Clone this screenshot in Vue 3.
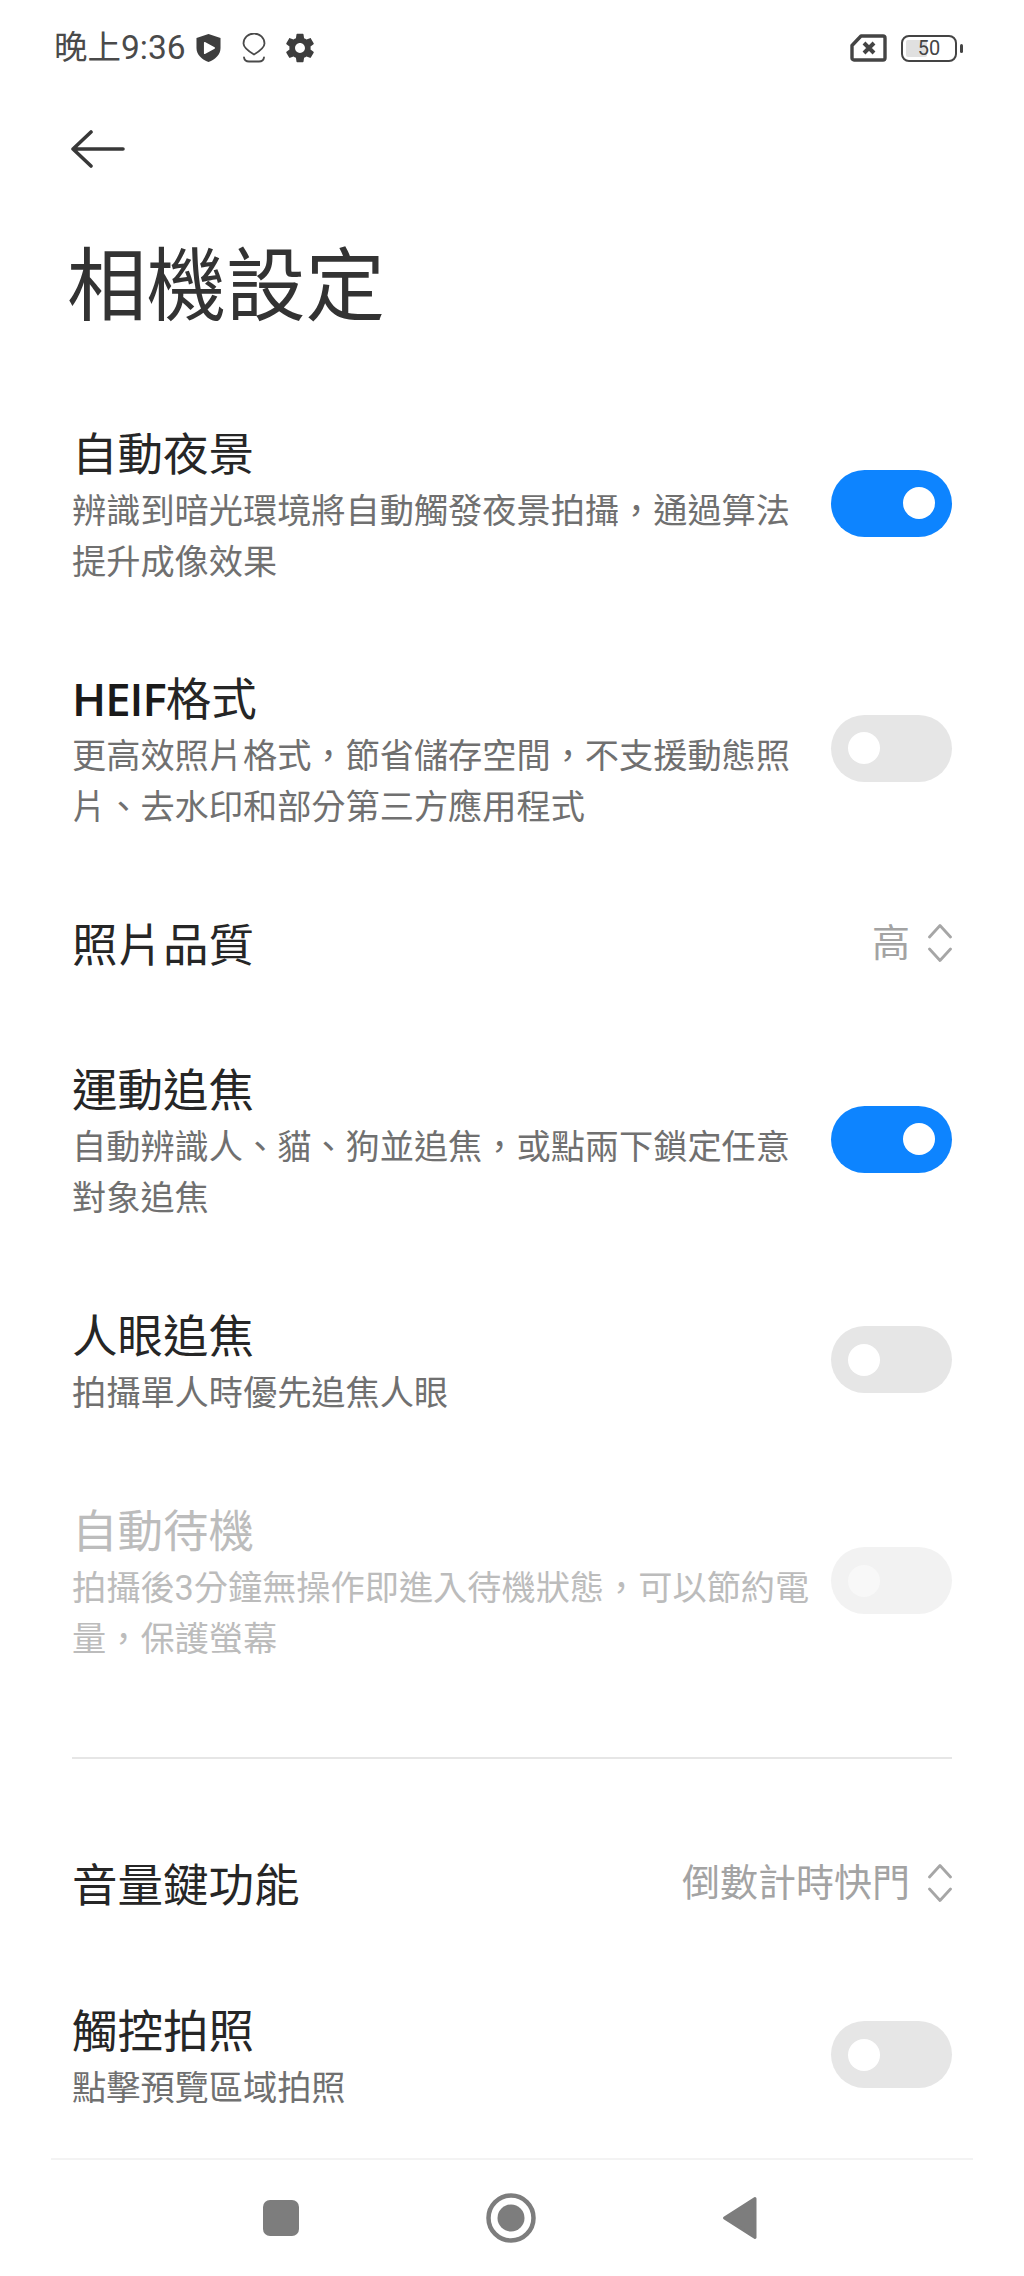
<script setup>
const group1 = [
  { title: '自動夜景', desc: ['辨識到暗光環境將自動觸發夜景拍攝，通過算法', '提升成像效果'], on: true },
  { latin: 'HEIF', title: '格式', desc: ['更高效照片格式，節省儲存空間，不支援動態照', '片、去水印和部分第三方應用程式'], on: false },
  { title: '照片品質', value: '高' },
  { title: '運動追焦', desc: ['自動辨識人、貓、狗並追焦，或點兩下鎖定任意', '對象追焦'], on: true },
  { title: '人眼追焦', desc: ['拍攝單人時優先追焦人眼'], on: false },
  { title: '自動待機', desc: ['拍攝後3分鐘無操作即進入待機狀態，可以節約電', '量，保護螢幕'], on: false, disabled: true },
]
const group2 = [
  { title: '音量鍵功能', value: '倒數計時快門' },
  { title: '觸控拍照', desc: ['點擊預覽區域拍照'], on: false },
]
</script>

<template>
  <div class="page">
    <div class="status">
      <span class="time">晚上9:36</span>
      <svg class="ic-shield" width="25" height="30" viewBox="0 0 26 30">
        <path d="M13 0.5 25.5 4.5V15C25.5 22 20 27 13 29.5 6 27 0.5 22 0.5 15V4.5Z" fill="#3d3d3d"/>
        <path d="M9 9.5 19 15 9 20.5Z" fill="#fff" stroke="#fff" stroke-width="1.5" stroke-linejoin="round"/>
      </svg>
      <svg class="ic-drop" width="24" height="30" viewBox="0 0 24 30" fill="none" stroke="#4a4a4a" stroke-width="1.8" stroke-linecap="round" stroke-linejoin="round">
        <path d="M12 21.5C7 18.5 1.5 15 1.5 10.5A10.5 10 0 0 1 22.5 10.5C22.5 15 17 18.5 12 21.5Z"/>
        <path d="M2 24.5C2.5 27.5 4.5 28.5 7 28.5H17C19.5 28.5 21.500 27.5 22 24.500"/>
      </svg>
      <svg class="ic-gear" width="34" height="34" viewBox="0 0 24 24">
        <path fill="#3d3d3d" d="M19.43 12.98c.04-.32.07-.64.07-.98s-.03-.66-.07-.98l2.11-1.65c.19-.15.24-.42.12-.64l-2-3.46c-.12-.22-.39-.3-.61-.22l-2.49 1c-.52-.4-1.08-.73-1.69-.98l-.38-2.65C14.46 2.18 14.25 2 14 2h-4c-.25 0-.46.18-.49.42l-.38 2.65c-.61.25-1.17.59-1.69.98l-2.49-1c-.23-.09-.49 0-.61.22l-2 3.46c-.13.22-.07.49.12.64l2.11 1.65c-.04.32-.07.65-.07.98s.03.66.07.98l-2.11 1.65c-.19.15-.24.42-.12.64l2 3.46c.12.22.39.3.61.22l2.49-1c.52.4 1.08.73 1.69.98l.38 2.65c.03.24.24.42.49.42h4c.25 0 .46-.18.49-.42l.38-2.65c.61-.25 1.17-.59 1.69-.98l2.49 1c.23.09.49 0 .61-.22l2-3.46c.12-.22.07-.49-.12-.64l-2.11-1.65zM12 15.500c-1.93 0-3.500-1.570-3.500-3.500s1.570-3.500 3.500-3.500 3.500 1.570 3.500 3.500-1.570 3.500-3.500 3.500z"/>
      </svg>
      <span class="spacer"></span>
      <svg width="37" height="28" viewBox="0 0 37 28" fill="none" stroke="#444" stroke-width="3.4" stroke-linejoin="round">
        <path d="M2 11.500 11 2H33A2 2 0 0 1 35 4V24A2 2 0 0 1 33 26H4A2 2 0 0 1 2 24Z"/>
        <path d="M14 9 24 19M24 9 14 19" stroke-width="4"/>
      </svg>
      <div class="battery">
        <div class="batt-body"><span class="batt-fill"></span><span class="batt-num">50</span></div>
        <span class="batt-cap"></span>
      </div>
    </div>

    <div class="back">
      <svg width="54" height="38" viewBox="0 0 54 38" fill="none" stroke="#383838" stroke-width="3.6" stroke-linecap="round" stroke-linejoin="round">
        <path d="M2 19H52M20 2 2 19 20 36"/>
      </svg>
    </div>

    <h1 class="heading">相機設定</h1>

    <div class="list">
      <div v-for="item in group1" :key="item.title" class="row" :class="{ disabled: item.disabled, single: !item.desc, one: item.desc && item.desc.length === 1 }">
        <div class="text">
          <div class="title"><span v-if="item.latin" class="latin">{{ item.latin }}</span>{{ item.title }}</div>
          <div v-if="item.desc" class="desc"><div v-for="l in item.desc" :key="l">{{ l }}</div></div>
        </div>
        <div v-if="item.value" class="value">
          <span>{{ item.value }}</span>
          <svg width="24" height="38" viewBox="0 0 24 38" fill="none" stroke="#a6a6a6" stroke-width="2.8" stroke-linecap="round" stroke-linejoin="round"><path d="M1.500 13 12 1.500 22.500 13M1.500 25 12 36.500 22.500 25"/></svg>
        </div>
        <div v-else class="switch" :class="{ on: item.on }"><span class="knob"></span></div>
      </div>
    </div>

    <div class="divider"></div>

    <div class="list">
      <div v-for="item in group2" :key="item.title" class="row" :class="{ single: !item.desc, one: item.desc && item.desc.length === 1 }">
        <div class="text">
          <div class="title">{{ item.title }}</div>
          <div v-if="item.desc" class="desc"><div v-for="l in item.desc" :key="l">{{ l }}</div></div>
        </div>
        <div v-if="item.value" class="value">
          <span>{{ item.value }}</span>
          <svg width="24" height="38" viewBox="0 0 24 38" fill="none" stroke="#a6a6a6" stroke-width="2.8" stroke-linecap="round" stroke-linejoin="round"><path d="M1.500 13 12 1.500 22.500 13M1.500 25 12 36.500 22.500 25"/></svg>
        </div>
        <div v-else class="switch" :class="{ on: item.on }"><span class="knob"></span></div>
      </div>
    </div>

    <div class="nav">
      <span class="nav-square"></span>
      <svg width="50" height="50" viewBox="0 0 50 50">
        <circle cx="25" cy="25" r="22.500" fill="none" stroke="#7d7d7d" stroke-width="4.500"/>
        <circle cx="25" cy="25" r="13.500" fill="#7d7d7d"/>
      </svg>
      <svg width="36" height="44" viewBox="0 0 36 44">
        <path d="M33 2.500 2.500 22 33 41.500Z" fill="#7d7d7d" stroke="#7d7d7d" stroke-width="3" stroke-linejoin="round"/>
      </svg>
    </div>
  </div>
</template>

<style>
html, body { margin: 0; background: #fff; }
</style>

<style scoped>
.page {
  width: 1024px;
  height: 2276px;
  overflow: hidden;
  background: #fff;
  font-family: "Roboto", "Noto Sans CJK TC", sans-serif;
  color: #333;
  display: flex;
  flex-direction: column;
}
.status {
  height: 96px;
  box-sizing: border-box;
  padding: 0 61px 0 54px;
  display: flex;
  align-items: center;
  color: #4a4a4a;
  flex: none;
}
.time { font-size: 33.5px; line-height: 96px; margin-right: 10px; }
.ic-shield { margin-right: 21px; }
.ic-drop { margin-right: 17px; }
.spacer { flex: 1; }
.battery { display: flex; align-items: center; margin-left: 14px; }
.batt-body {
  position: relative;
  width: 56px;
  height: 27px;
  box-sizing: border-box;
  border: 2.5px solid #444;
  border-radius: 8px;
}
.batt-fill { position: absolute; left: 3px; top: 3px; bottom: 3px; width: 21px; background: #e0e0e0; border-radius: 2px; }
.batt-num {
  position: absolute; inset: 0; text-align: center;
  font-size: 20px; line-height: 22px; color: #444;
}
.batt-cap { width: 3px; height: 9px; background: #444; margin-left: 3px; border-radius: 1.500px; }
.back { height: 54px; margin-top: 26px; padding-left: 71px; box-sizing: border-box; display: flex; align-items: center; flex: none; }
.heading {
  margin: 61px 0 43px 67px;
  font-size: 79.500px;
  line-height: 100px;
  font-weight: 400;
  color: #333;
  flex: none;
}
.list { display: flex; flex-direction: column; flex: none; }
.row {
  display: flex;
  align-items: center;
  justify-content: space-between;
  padding: 38px 72px 37px 72px;
}
.row.single { padding-top: 39px; padding-bottom: 39px; }
.row.one { padding-top: 39px; padding-bottom: 38px; }
.text { flex: 1; min-width: 0; padding-top: 8px; }
.title { font-size: 45.500px; line-height: 60px; height: 60px; color: #262626; white-space: nowrap; }
.latin { font-family: "Open Sans", sans-serif; font-weight: 600; color: #1a1a1a; line-height: 0; letter-spacing: -1px; }
.desc { font-size: 34.200px; line-height: 51px; color: #707070; margin-top: 0; white-space: nowrap; }
.disabled .title { color: #bcbcbc; }
.disabled .desc { color: #bcbcbc; }
.value { display: flex; align-items: center; gap: 18px; font-size: 38px; color: #a3a3a3; line-height: 60px; white-space: nowrap; flex: none; }
.switch {
  width: 121px;
  height: 67px;
  border-radius: 34px;
  background: #e6e6e6;
  position: relative;
  flex: none;
}
.switch.on { background: #0d84ff; }
.knob {
  position: absolute;
  width: 32px;
  height: 32px;
  border-radius: 50%;
  background: #fff;
  top: 17.500px;
  left: 17px;
}
.switch.on .knob { left: 72px; }
.disabled .switch { background: #f2f2f2; }
.disabled .knob { background: #f8f8f8; top: 18px; }
.divider { height: 2px; margin: 55px 72px 51px 72px; background: #e6e6e6; flex: none; }
.nav {
  position: relative;
  height: 118px;
  border-top: 2px solid #f3f3f3;
  box-sizing: border-box;
  display: flex;
  align-items: center;
  justify-content: space-between;
  padding: 0 215px 0 212px;
  margin: 6px 51px 0;
  flex: none;
}
.nav-square { width: 36px; height: 36px; border-radius: 7px; background: #7d7d7d; }
</style>
